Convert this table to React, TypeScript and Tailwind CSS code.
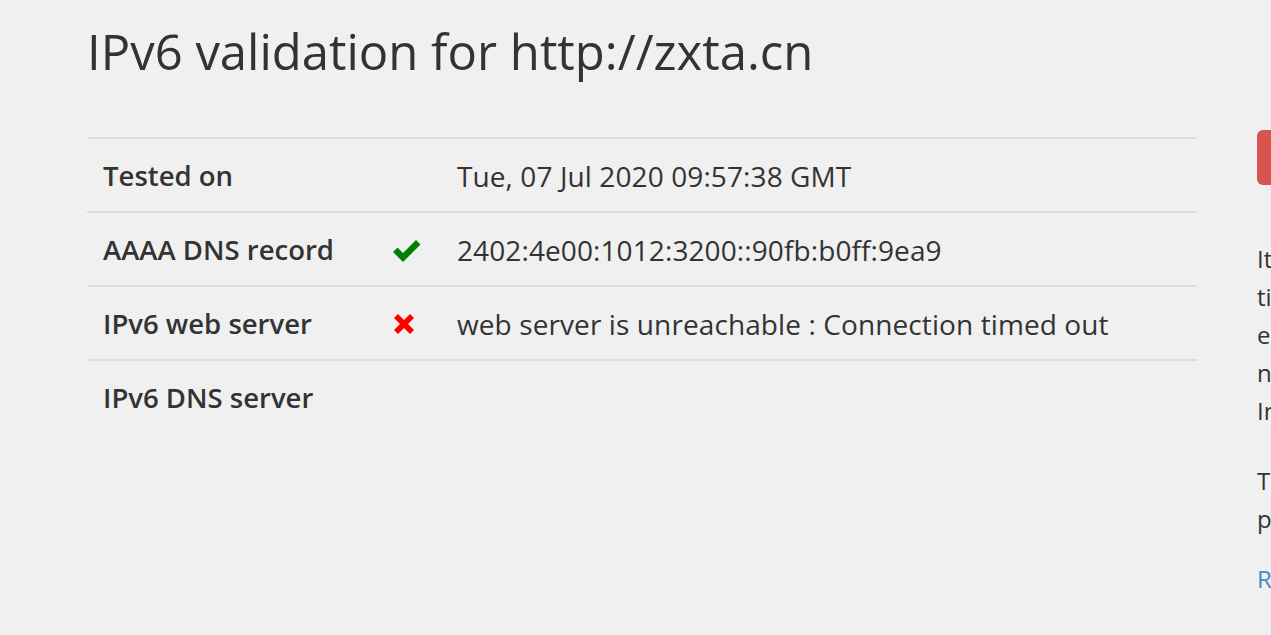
const rows = [
  { label: "Tested on", status: null, value: "Tue, 07 Jul 2020 09:57:38 GMT" },
  { label: "AAAA DNS record", status: "ok", value: "2402:4e00:1012:3200::90fb:b0ff:9ea9" },
  { label: "IPv6 web server", status: "fail", value: "web server is unreachable : Connection timed out" },
  { label: "IPv6 DNS server", status: null, value: "" },
];

const StatusIcon = ({ status }: { status: string | null }) => {
  if (status === "ok")
    return (
      <svg width="30" height="26" viewBox="0 0 30 26">
        <path d="M1 15 L5.5 10.5 L11 16 L24 3 L28.5 7.5 L11 25 Z" fill="#008000" />
      </svg>
    );
  if (status === "fail")
    return (
      <svg width="24" height="24" viewBox="0 0 24 24">
        <path d="M2 6 L6 2 L12 8 L18 2 L22 6 L16 12 L22 18 L18 22 L12 16 L6 22 L2 18 L8 12 Z" fill="#ff0000" />
      </svg>
    );
  return null;
};

export default function App() {
  return (
    <div
      className="w-[1271px] h-[635px] overflow-hidden bg-[#f0f0f0] text-[#333]"
      style={{ fontFamily: '"Open Sans", "Noto Sans", sans-serif' }}
    >
      <div className="flex gap-[60px] pl-[87px]">
        <main className="w-[1110px] shrink-0">
          <h1 className="text-[49px] leading-[1.1] font-normal mt-[25px] mb-[58px]">
            IPv6 validation for http://zxta.cn
          </h1>
          <div>
            {rows.map((r) => (
              <div
                key={r.label}
                className="grid grid-cols-[289px_65px_1fr] h-[74px] items-center border-t-2 border-[#ddd] text-[27.5px] pt-[2px]"
              >
                <div className="pl-4 font-semibold">{r.label}</div>
                <div className="pl-4 flex items-center">
                  <StatusIcon status={r.status} />
                </div>
                <div className="pl-4 text-[28px] tracking-[0.1px]">{r.value}</div>
              </div>
            ))}
          </div>
        </main>
        <aside className="w-[280px] shrink-0 pt-[130px] text-[24px] leading-[38px]">
          <button className="h-[55px] w-[260px] rounded-md bg-[#d9534f] text-white">
            Test again
          </button>
          <p className="mt-[55px] mb-[32px]">
            It may take some
            <br />
            time before all DNS
            <br />
            entries of a
            <br />
            new server reach the
            <br />
            Internet.
          </p>
          <p className="mb-[22px]">
            The test can be repeated
            <br />
            periodically.
          </p>
          <a className="text-[#428bca]">Read more</a>
        </aside>
      </div>
    </div>
  );
}
